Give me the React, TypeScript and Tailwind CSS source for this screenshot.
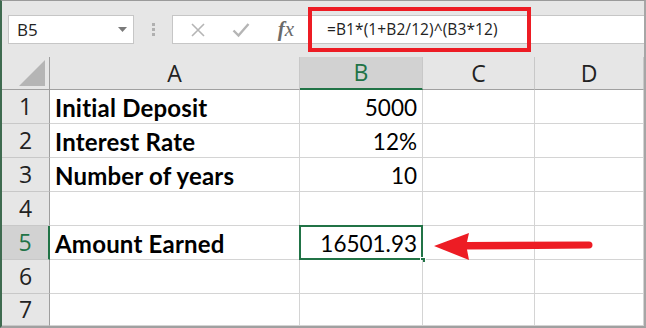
import React from "react";

const cols = [
  { key: "A", w: "w-[250px]" },
  { key: "B", w: "w-[123px]" },
  { key: "C", w: "w-[112px]" },
  { key: "D", w: "w-[109px]" },
];

const rows: { n: number; a: string; b: string }[] = [
  { n: 1, a: "Initial Deposit", b: "5000" },
  { n: 2, a: "Interest Rate", b: "12%" },
  { n: 3, a: "Number of years", b: "10" },
  { n: 4, a: "", b: "" },
  { n: 5, a: "Amount Earned", b: "16501.93" },
  { n: 6, a: "", b: "" },
  { n: 7, a: "", b: "" },
];

const cellFont = { fontFamily: "Lato, 'Liberation Sans', sans-serif" };

export default function App() {
  return (
    <div className="relative w-[646px] h-[328px] overflow-hidden bg-[#e6e6e6] border-l-2 border-l-[#3f6b50] border-r-2 border-r-[#a6a6a6] border-t border-t-[#9a9a9a] border-b-2 border-b-[#a0a0a0] flex flex-col">
      {/* Toolbar */}
      <div className="h-[56px] flex items-start pt-[14px] shrink-0">
        <div className="ml-[6px] w-[126px] h-[29px] bg-white border border-[#c6c6c6] flex items-center justify-between pl-[8px] pr-[6px]">
          <span className="text-[17px] text-[#222]" style={{ fontFamily: "'Open Sans', sans-serif" }}>B5</span>
          <svg width="9" height="5" viewBox="0 0 9 5"><path d="M0 0h9L4.5 5z" fill="#7a7a7a" /></svg>
        </div>
        <div className="w-[38px] h-[29px] flex flex-col items-center justify-center gap-[2px]">
          <div className="w-[3px] h-[3px] bg-[#b0b0b0]" />
          <div className="w-[3px] h-[3px] bg-[#b0b0b0]" />
          <div className="w-[3px] h-[3px] bg-[#b0b0b0]" />
        </div>
        <div className="flex-1 h-[29px] bg-white border border-[#c6c6c6] border-r-0 flex items-center">
          <div className="w-[48px] flex justify-center pl-[2px]">
            <svg width="16" height="16" viewBox="0 0 16 16"><path d="M2 2L14 14M14 2L2 14" stroke="#b5b5b5" strokeWidth="1.6" /></svg>
          </div>
          <div className="w-[40px] flex justify-center">
            <svg width="18" height="16" viewBox="0 0 18 16"><path d="M1.5 8.5L6.5 13.5L16.5 2" stroke="#b5b5b5" strokeWidth="2.4" fill="none" /></svg>
          </div>
          <div className="w-[50px] flex justify-center">
            <span className="italic text-[21px] text-[#6a6a6a] leading-none" style={{ fontFamily: "'Liberation Serif', serif" }}>
              <span className="font-bold">f</span>x
            </span>
          </div>
          <div className="pl-[16px] text-[15.5px] text-[#222] tracking-[0.1px]" style={{ fontFamily: "'Open Sans', sans-serif" }}>
            =B1*(1+B2/12)^(B3*12)
          </div>
        </div>
      </div>

      {/* Header row */}
      <div className="flex h-[33px] shrink-0">
        <div className="w-[48px] border-r border-r-[#9e9e9e] border-b border-b-[#a0a0a0] flex items-end justify-end pr-[4px] pb-[3px]">
          <svg width="26" height="26" viewBox="0 0 26 26"><path d="M26 0V26H0z" fill="#b5b5b5" /></svg>
        </div>
        {cols.map((c) => {
          const sel = c.key === "B";
          return (
            <div
              key={c.key}
              className={`${c.w} flex items-center justify-center text-[23px] border-r border-r-[#c8c8c8] ${sel ? "bg-[#d2d2d2] text-[#217346] border-b-2 border-b-[#217346]" : "text-[#222] border-b border-b-[#a0a0a0]"}`}
              style={{ fontFamily: "'Open Sans', sans-serif" }}
            >
              {c.key}
            </div>
          );
        })}
      </div>

      {/* Data rows */}
      {rows.map((r) => {
        const sel = r.n === 5;
        return (
          <div key={r.n} className={`flex shrink-0 ${r.n === 7 ? "h-[32px]" : "h-[34px]"}`}>
            <div
              className={`w-[48px] flex items-center justify-center text-[23px] border-b border-b-[#c8c8c8] ${sel ? "bg-[#d2d2d2] text-[#217346] border-r-2 border-r-[#217346]" : "text-[#222] border-r border-r-[#9e9e9e]"}`}
              style={{ fontFamily: "'Open Sans', sans-serif" }}
            >
              {r.n}
            </div>
            <div
              className="w-[250px] bg-white border-r border-r-[#d4d4d4] border-b border-b-[#d4d4d4] flex items-center pl-[5px] pt-[2px] font-bold text-[24px] tracking-[0.2px] text-black"
              style={cellFont}
            >
              {r.a}
            </div>
            <div className="relative w-[123px] bg-white border-r border-r-[#d4d4d4] border-b border-b-[#d4d4d4] flex items-center justify-end pr-[5px] pt-[2px] text-[22.5px] text-black" style={cellFont}>
              {r.b}
              {sel && (
                <>
                  <div className="absolute left-[-1px] top-[-1px] right-[-1px] bottom-[-1px] border-2 border-[#217346]" />
                  <div className="absolute right-[-4px] bottom-[-4px] w-[6px] h-[6px] bg-[#217346] border border-white" />
                </>
              )}
            </div>
            <div className="w-[112px] bg-white border-r border-r-[#d4d4d4] border-b border-b-[#d4d4d4]" />
            <div className="w-[109px] bg-white border-r border-r-[#d4d4d4] border-b border-b-[#d4d4d4]" />
          </div>
        );
      })}

      {/* Red highlight around formula */}
      <div className="absolute left-[306px] top-[6px] w-[223px] h-[45px] border-[4px] border-[#ed1c24]" />

      {/* Red arrow */}
      <svg className="absolute left-[430px] top-[230px]" width="164" height="32" viewBox="0 0 164 32">
        <path d="M2 15L37 2L35 11L157 10.5A3.5 3.5 0 0 1 157 17.5L35 18.5L37 29z" fill="#ed1c24" />
      </svg>
    </div>
  );
}
